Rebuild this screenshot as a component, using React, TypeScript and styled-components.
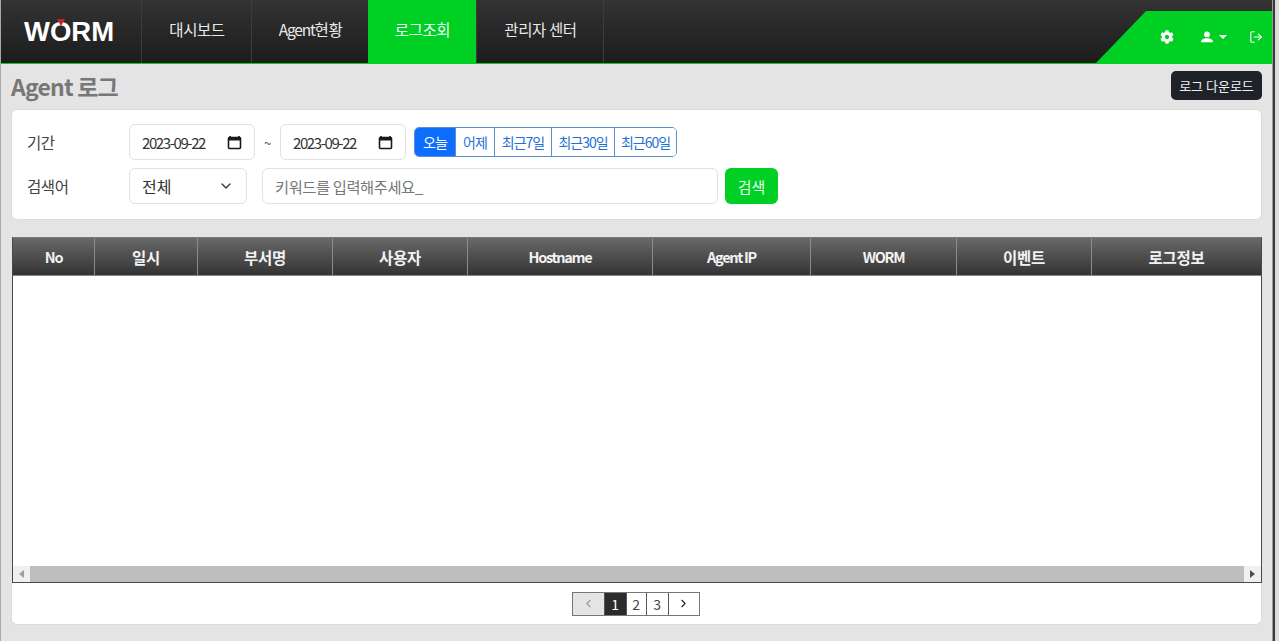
import React from 'react';
import styled, { createGlobalStyle } from 'styled-components';
import { LogOut, ChevronDown, ChevronLeft, ChevronRight } from 'lucide-react';
import { FaCog } from 'react-icons/fa';

const GlobalStyle = createGlobalStyle`
  html, body { margin: 0; padding: 0; height: 100%; overflow: hidden; background: #fff; }
  #root { height: 100%; }
  * { box-sizing: border-box; }
  body { font-family: "Noto Sans CJK KR", "Noto Sans", sans-serif; letter-spacing: -0.4px; }
`;

const Page = styled.div`
  width: 1279px;
  height: 641px;
  display: flex;
  background: #dcdcdc;
`;

const Frame = styled.div`
  width: 1273px;
  height: 641px;
  flex: none;
  display: flex;
  flex-direction: column;
  background: #e4e4e4;
  border-left: 1px solid #a8a8a8;
  border-right: 1px solid #999;
  box-shadow: 2px 0 0 #3a3a3a;
`;

const Header = styled.header`
  height: 64px;
  flex: none;
  display: flex;
  background: linear-gradient(#333, #1c1c1c);
  border-bottom: 1px solid #00cf24;
`;

const Logo = styled.div`
  width: 140px;
  padding-left: 23px;
  display: flex;
  align-items: center;
  font: 700 27.5px "Liberation Sans", sans-serif;
  letter-spacing: 0;
  color: #fff;
  position: relative;
`;

const LogoMark = styled.i`
  position: absolute;
  left: 56px;
  top: 19px;
  width: 0;
  height: 0;
  border-left: 4.5px solid transparent;
  border-right: 4.5px solid transparent;
  border-top: 7px solid #c8202c;
`;

const NavItem = styled.div<{ $w: number; $active?: boolean }>`
  width: ${p => p.$w}px;
  flex: none;
  display: flex;
  align-items: center;
  justify-content: center;
  padding: 0 0 6px 1px;
  font-size: 15.5px;
  color: #e8e8e8;
  border-left: 1px solid #3c3c3c;
  ${p => p.$active && 'background: #00cf24; color: #eafff0; border-left: none;'}
`;

const TightLatin = styled.span`
  letter-spacing: -1.2px;
`;

const NavEnd = styled.div`
  width: 1px;
  background: #3c3c3c;
`;

const HeaderTools = styled.div`
  margin-left: auto;
  margin-top: 11px;
  width: 176px;
  display: flex;
  align-items: center;
  padding: 0 9px 0 64px;
  background: #00cf24;
  clip-path: polygon(50px 0, 100% 0, 100% 100%, 0 100%);
  color: #fff;
`;

const UserMenu = styled.span`
  margin-left: 27px;
  display: flex;
  align-items: center;
  gap: 6px;
`;

const LogoutIcon = styled(LogOut)`
  margin-left: auto;
`;

const Caret = styled.i`
  width: 0;
  height: 0;
  border-left: 4px solid transparent;
  border-right: 4px solid transparent;
  border-top: 4px solid #fff;
`;

const Content = styled.main`
  flex: 1;
  display: flex;
  flex-direction: column;
  padding: 0 10px;
`;

const TitleRow = styled.div`
  height: 45px;
  flex: none;
  display: flex;
  align-items: center;
  justify-content: space-between;
  padding-bottom: 2px;
`;

const Title = styled.h1`
  margin: 0;
  font-size: 23px;
  font-weight: 700;
  color: #777;
  letter-spacing: -0.8px;
`;

const DownloadButton = styled.button`
  height: 29px;
  width: 91px;
  padding: 0;
  border: none;
  border-radius: 5px;
  background: #1f2329;
  color: #f0f0f0;
  font: inherit;
  font-size: 13px;
`;

const Card = styled.section`
  background: #fff;
  border: 1px solid #dcdcdc;
  border-radius: 6px;
`;

const FilterCard = styled(Card)`
  height: 111px;
  flex: none;
  padding: 14px 15px;
  display: flex;
  flex-direction: column;
  gap: 8px;
`;

const FilterRow = styled.div`
  height: 36px;
  flex: none;
  display: flex;
  align-items: center;
`;

const Label = styled.label`
  width: 102px;
  flex: none;
  font-size: 15.5px;
  color: #444;
`;

const Field = styled.div<{ $w: number }>`
  width: ${p => p.$w}px;
  height: 36px;
  flex: none;
  display: flex;
  align-items: center;
  justify-content: space-between;
  padding: 0 12px;
  border: 1px solid #dee2e6;
  border-radius: 6px;
  font-size: 16px;
  color: #333;
  background: #fff;
  letter-spacing: 0;
`;

const DateField = styled(Field)`
  font-size: 15px;
  letter-spacing: -1.4px;
`;

const Tilde = styled.span`
  width: 25px;
  text-align: center;
  font-size: 13px;
  color: #555;
`;

const RangeGroup = styled.div`
  display: flex;
  height: 30px;
  margin-left: 8px;
  border: 1px solid #5c8fce;
  border-radius: 5px;
  overflow: hidden;
`;

const RangeButton = styled.button<{ $w: number; $active?: boolean }>`
  width: ${p => p.$w}px;
  padding: 0;
  border: none;
  border-left: 1px solid #5c8fce;
  background: ${p => (p.$active ? '#0d6efd' : '#fff')};
  color: ${p => (p.$active ? '#fff' : '#1f6fd6')};
  font: inherit;
  font-size: 14px;
  letter-spacing: -1px;
  &:first-child { border-left: none; }
`;

const Keyword = styled(Field)`
  margin-left: 15px;
  font-size: 15.3px;
  letter-spacing: -0.4px;
  color: #777;
`;

const SearchButton = styled.button`
  width: 53px;
  height: 36px;
  margin-left: 7px;
  padding: 0;
  border: none;
  border-radius: 6px;
  background: #00cf24;
  color: #e6fff0;
  font: inherit;
  font-size: 15px;
`;

const TableWrap = styled.div`
  margin-top: 17px;
  margin-left: 1px;
  height: 346px;
  flex: none;
  display: flex;
  flex-direction: column;
  background: #fff;
  border: 1px solid #4a4a4a;
  border-top: none;
`;

const HeadRow = styled.div`
  height: 39px;
  flex: none;
  display: flex;
  background: linear-gradient(#696969, #333);
  border-top: 1px solid #777;
  border-bottom: 1px solid #888;
`;

const HeadCell = styled.div<{ $w: number; $latin?: boolean }>`
  width: ${p => p.$w}px;
  flex: none;
  display: flex;
  align-items: center;
  justify-content: center;
  font-size: ${p => (p.$latin ? '14.5px' : '15.5px')};
  letter-spacing: ${p => (p.$latin ? '-1.3px' : '-0.3px')};
  font-weight: 700;
  color: #f2f2f2;
  border-right: 1px solid #8a8a8a;
  &:last-child { border-right: none; flex: 1; }
`;

const TableBody = styled.div`
  flex: 1;
`;

const ScrollBar = styled.div`
  height: 16px;
  flex: none;
  display: flex;
  align-items: center;
  background: #f0f0f0;
`;

const ScrollArrow = styled.i<{ $dir: 'left' | 'right' }>`
  width: 17px;
  flex: none;
  display: flex;
  justify-content: center;
  &::before {
    content: '';
    width: 0;
    height: 0;
    border-top: 4px solid transparent;
    border-bottom: 4px solid transparent;
    ${p => (p.$dir === 'left' ? 'border-right: 5px solid #a0a0a0;' : 'border-left: 5px solid #505050;')}
  }
`;

const ScrollThumb = styled.div`
  flex: 1;
  height: 16px;
  background: #bebebe;
`;

const PagerCard = styled(Card)`
  height: 42px;
  flex: none;
  border-top: none;
  border-radius: 0 0 6px 6px;
  display: flex;
  align-items: center;
  justify-content: center;
`;

const Pager = styled.div`
  display: flex;
  height: 24px;
  margin-right: 2px;
  border: 1px solid #777;
`;

const PageCell = styled.div<{ $w: number; $state?: 'active' | 'disabled' }>`
  width: ${p => p.$w}px;
  display: flex;
  align-items: center;
  justify-content: center;
  font-size: 14px;
  border-left: 1px solid #555;
  color: ${p => (p.$state === 'active' ? '#fff' : p.$state === 'disabled' ? '#999' : '#444')};
  background: ${p => (p.$state === 'active' ? '#2b2b2b' : p.$state === 'disabled' ? '#e4e4e4' : '#fff')};
  &:first-child { border-left: none; }
`;

const nav = [
  { label: '대시보드', w: 110 },
  { label: <><TightLatin>Agent</TightLatin>현황</>, w: 117 },
  { label: '로그조회', w: 108, active: true },
  { label: '관리자 센터', w: 127 },
];

const ranges = [
  { label: '오늘', w: 40, active: true },
  { label: '어제', w: 39 },
  { label: '최근7일', w: 57 },
  { label: '최근30일', w: 63 },
  { label: '최근60일', w: 62 },
];

const columns = [
  { label: 'No', w: 82, latin: true },
  { label: '일시', w: 103 },
  { label: '부서명', w: 135 },
  { label: '사용자', w: 135 },
  { label: 'Hostname', w: 185, latin: true },
  { label: 'Agent IP', w: 158, latin: true },
  { label: 'WORM', w: 146, latin: true },
  { label: '이벤트', w: 135 },
  { label: '로그정보', w: 168 },
];

const UserIcon = () => (
  <svg width="12" height="12" viewBox="0 0 16 16" fill="currentColor">
    <circle cx="8" cy="4.5" r="3.8" />
    <path d="M0 15c0-3.6 3.4-5.2 8-5.2s8 1.6 8 5.2z" />
  </svg>
);

const CalendarIcon = () => (
  <svg width="15" height="15" viewBox="0 0 15 15" fill="none">
    <path d="M3 1v2M12 1v2" stroke="#1a1a1a" strokeWidth="1.6" />
    <rect x="1.5" y="2.5" width="12" height="11" rx="1" stroke="#1a1a1a" strokeWidth="1.6" />
    <rect x="1.5" y="2.5" width="12" height="3" fill="#1a1a1a" />
  </svg>
);

export default function App() {
  return (
    <Page>
      <GlobalStyle />
      <Frame>
        <Header>
          <Logo>
            <LogoMark />
            WORM
          </Logo>
          {nav.map((n, i) => (
            <NavItem key={i} $w={n.w} $active={n.active}>{n.label}</NavItem>
          ))}
          <NavEnd />
          <HeaderTools>
            <FaCog size={14} />
            <UserMenu><UserIcon /><Caret /></UserMenu>
            <LogoutIcon size={14} strokeWidth={2} />
          </HeaderTools>
        </Header>
        <Content>
          <TitleRow>
            <Title>Agent 로그</Title>
            <DownloadButton>로그 다운로드</DownloadButton>
          </TitleRow>
          <FilterCard>
            <FilterRow>
              <Label>기간</Label>
              <DateField $w={126}>2023-09-22<CalendarIcon /></DateField>
              <Tilde>~</Tilde>
              <DateField $w={126}>2023-09-22<CalendarIcon /></DateField>
              <RangeGroup>
                {ranges.map(r => (
                  <RangeButton key={r.label} $w={r.w} $active={r.active}>{r.label}</RangeButton>
                ))}
              </RangeGroup>
            </FilterRow>
            <FilterRow>
              <Label>검색어</Label>
              <Field $w={118}>전체<ChevronDown size={16} strokeWidth={2} /></Field>
              <Keyword $w={456}>키워드를 입력해주세요_</Keyword>
              <SearchButton>검색</SearchButton>
            </FilterRow>
          </FilterCard>
          <TableWrap>
            <HeadRow>
              {columns.map(c => (
                <HeadCell key={c.label} $w={c.w} $latin={c.latin}>{c.label}</HeadCell>
              ))}
            </HeadRow>
            <TableBody />
            <ScrollBar>
              <ScrollArrow $dir="left" />
              <ScrollThumb />
              <ScrollArrow $dir="right" />
            </ScrollBar>
          </TableWrap>
          <PagerCard>
            <Pager>
              <PageCell $w={31} $state="disabled"><ChevronLeft size={13} /></PageCell>
              <PageCell $w={22} $state="active">1</PageCell>
              <PageCell $w={20}>2</PageCell>
              <PageCell $w={22}>3</PageCell>
              <PageCell $w={31}><ChevronRight size={13} color="#222" /></PageCell>
            </Pager>
          </PagerCard>
        </Content>
      </Frame>
    </Page>
  );
}
